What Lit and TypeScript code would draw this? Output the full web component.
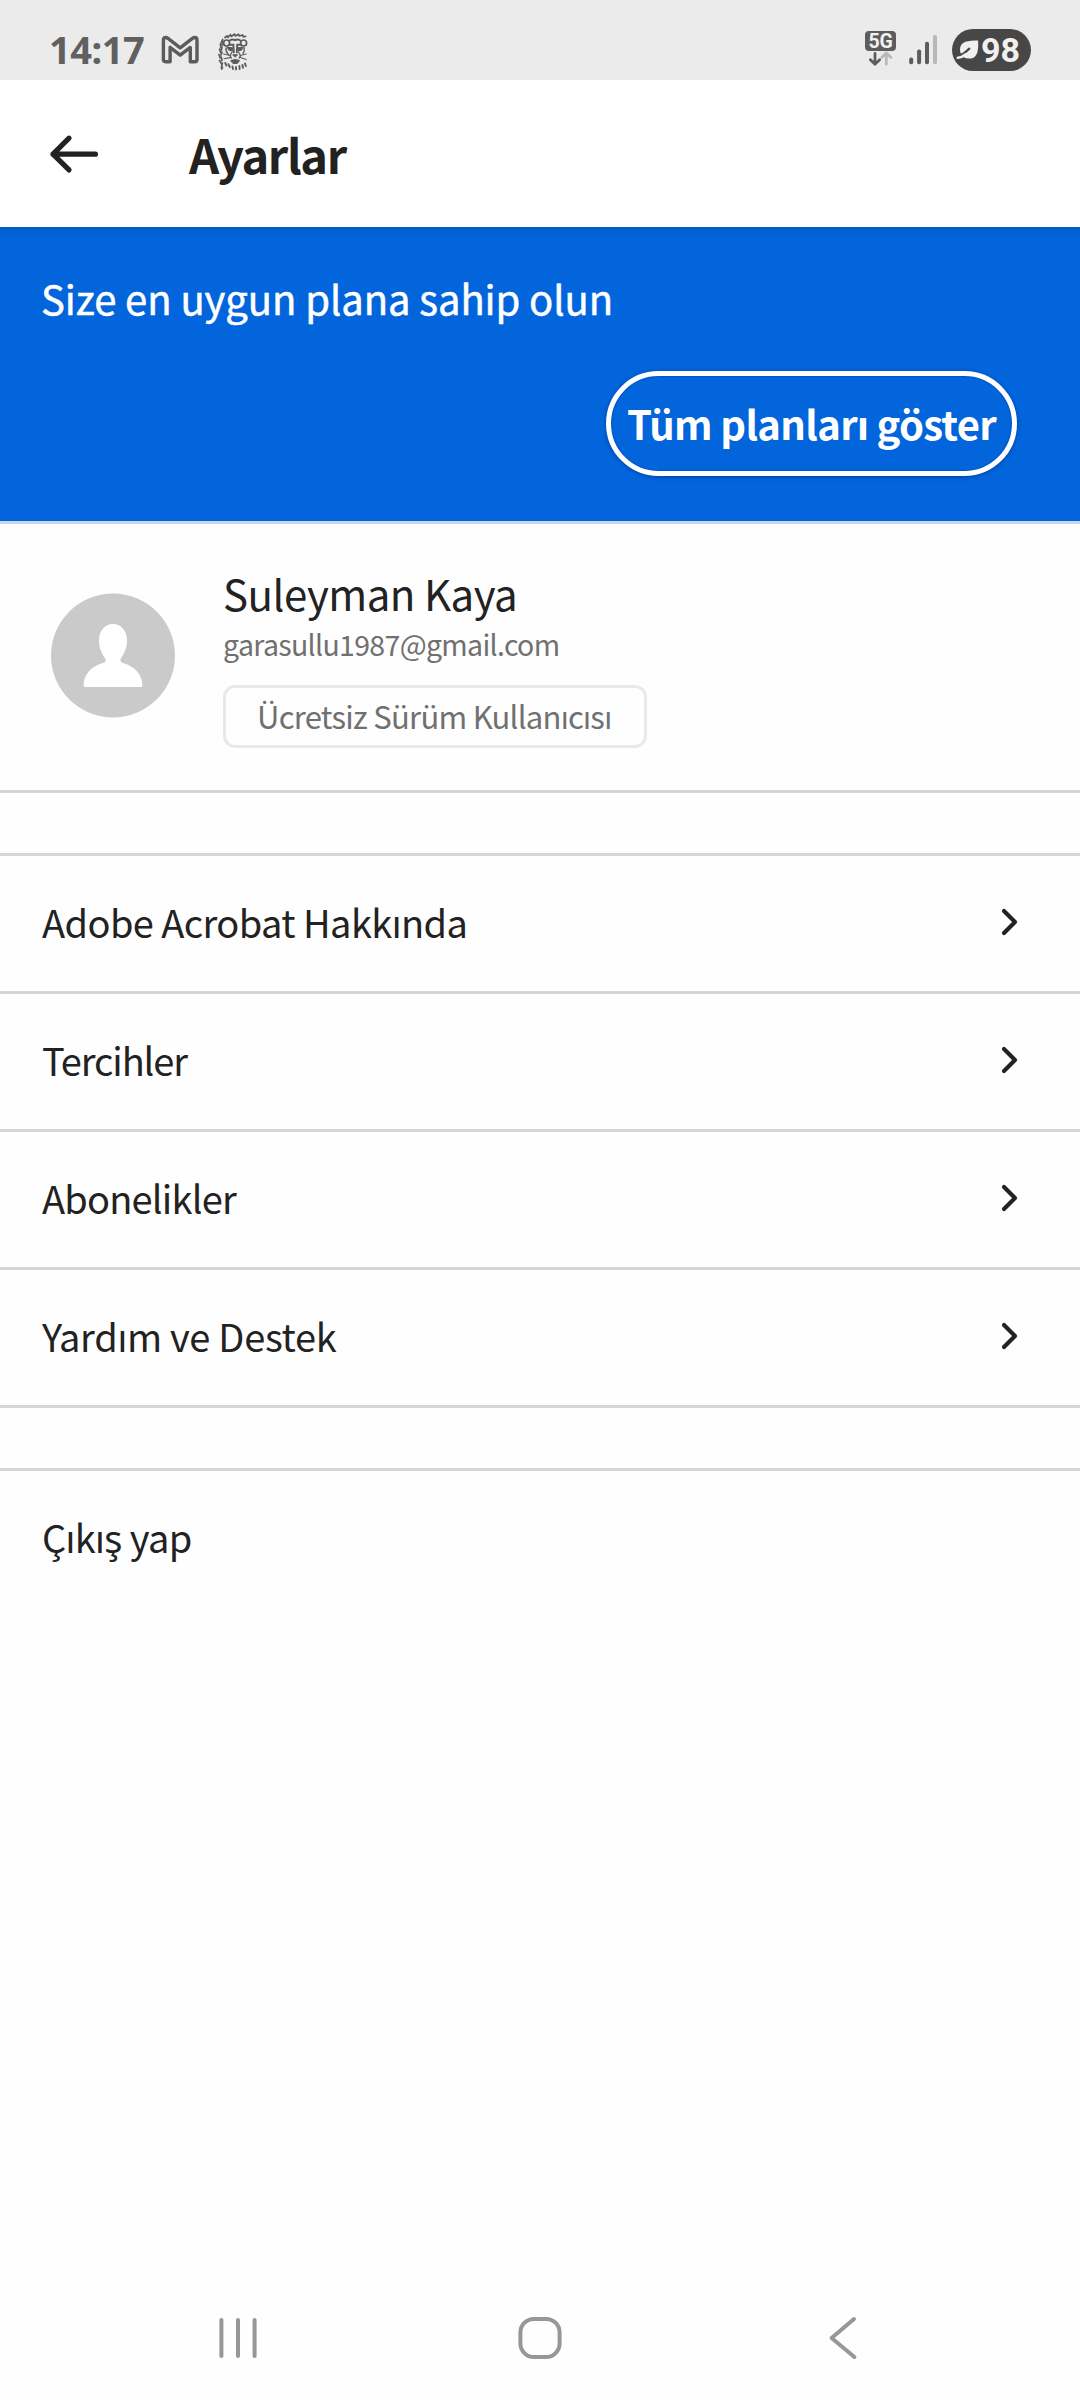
import { LitElement, html, css } from "lit";
import { customElement, property } from "lit/decorators.js";

interface SettingsItem {
  label: string;
  tracking: number;
}

const ITEMS: SettingsItem[] = [
  { label: "Adobe Acrobat Hakkında", tracking: -0.58 },
  { label: "Tercihler", tracking: -1.1 },
  { label: "Abonelikler", tracking: -0.8 },
  { label: "Yardım ve Destek", tracking: -0.3 },
];

@customElement("status-bar")
export class StatusBar extends LitElement {
  static styles = css`
    :host {
      display: flex;
      box-sizing: border-box;
      height: 80px;
      padding: 0 49px 0 49px;
      background: #ebebeb;
      align-items: flex-start;
      justify-content: space-between;
      color: #606060;
    }
    .side {
      display: flex;
      align-items: flex-start;
    }
    .time {
      width: 112px;
      padding-top: 24px;
      font: 700 38px/50px "Noto Sans", "Open Sans", sans-serif;
      letter-spacing: -0.5px;
    }
    .mail {
      margin-top: 35px;
      margin-right: 19px;
    }
    .lion {
      margin-top: 33px;
    }
    .net {
      width: 34px;
      margin-top: 31px;
      margin-right: 10px;
    }
    .tag {
      width: 31px;
      height: 20px;
      border-radius: 4px;
      background: #5c5c5c;
      color: #f1f1f1;
      font: 700 19.5px/21px Roboto, sans-serif;
      letter-spacing: -0.3px;
      text-align: center;
    }
    .signal {
      margin-top: 35px;
      margin-right: 14px;
    }
    svg {
      display: block;
    }
    .battery {
      display: flex;
      box-sizing: border-box;
      width: 79px;
      height: 42px;
      margin-top: 29px;
      padding-left: 4px;
      border-radius: 21px;
      background: #474747;
      color: #f0f0f0;
      align-items: center;
      gap: 2px;
      font: 700 34px/42px Roboto, sans-serif;
    }
  `;

  render() {
    return html`
      <div class="side">
        <span class="time">14:17</span>
        <svg class="mail" width="38" height="29" viewBox="0 0 38 29" fill="none" stroke="#5c5c5c" stroke-width="3.4" stroke-linejoin="round">
          <path d="M2.4 5.2Q2.4 2.5 4.8 2.5Q5.8 2.5 7 3.4L19.2 12.8L31.4 3.4Q32.6 2.5 33.6 2.5Q36 2.5 36 5.2V24.4Q36 26.8 33.8 26.8H29.3V12.4L19.2 20.2L9.1 12.4V26.8H4.6Q2.4 26.8 2.4 24.4Z" />
        </svg>
        <svg class="lion" width="30" height="38" viewBox="0 0 30 38" fill="none" stroke="#5c5c5c" stroke-width="1.5" stroke-linecap="round">
          <path d="M7 4.5L9 3L10 4.2L12.5 1.8L13.5 3.2L16.5 1.3L17.5 2.8L20.5 1.4L21.5 3L24.5 2L25.5 3.8L27.5 3.4" stroke-width="1.8" />
          <path d="M4.6 6.5L3 10M5.5 8.5L4.2 12M2.4 11L2.8 14.5M4 14L3.4 17M1.6 16L2.6 19.5M4 19L3 22M1 21.5L2.2 25M3.2 24L4 27.5M1.6 27.5L3.4 30.5M4.4 30L3.4 34.5M4.4 34.5L3.6 36" stroke-width="1.7" />
          <circle cx="8.6" cy="10" r="3" stroke-width="1.7" />
          <circle cx="25.6" cy="10" r="3" stroke-width="1.7" />
          <path d="M11 8Q14 5.6 17 7.2Q20 5.6 23.2 8M11.5 11.8H15.4L15.8 19.4M23 11.8H19.2L18.8 19.4" stroke-width="1.9" />
          <path d="M9.5 14.4L14.2 14.8V17.8L11 17ZM25 14.4L20.4 14.8V17.8L23.4 17Z" fill="#5c5c5c" stroke-width="1.3" />
          <path d="M15 21.8H19.6L17.3 24ZM13 27.5Q17.3 25.4 21.6 27.5L19.4 30.4H15.2Z" fill="#5c5c5c" stroke-width="1" />
          <path d="M8 15Q7.6 19 10.4 21.5M26.2 15Q26.8 18 25 20.5M13.8 19.6Q11 23 13.4 25M20.8 19.6Q23.6 23 21.2 25" stroke-width="1.4" />
          <path d="M12 22.5L5.6 21M12 24.6L6 25.8M22.4 22.5L28.2 21M22.4 24.6L28.2 26.6" stroke-width="1.1" />
          <path d="M7.2 29.8L8.4 32.6M10.4 31.2L11.8 34M14.4 33.4L15 36M18 34V36.4M21.4 33L21.6 36M24.4 32L25 34.8M27 30.4L27.8 33" stroke-width="1.9" />
        </svg>
      </div>
      <div class="side">
        <div class="net">
          <div class="tag">5G</div>
          <svg width="34" height="15" viewBox="0 0 34 15" fill="none" stroke-width="2.8" stroke-linecap="round" stroke-linejoin="round">
            <path d="M10 2.4V13M5.4 8.8L10 13.2L14.6 8.8" stroke="#5c5c5c" />
            <path d="M21.3 13.2V3M16.7 6.4L21.3 2L25.9 6.4" stroke="#b8b8b8" />
          </svg>
        </div>
        <svg class="signal" width="29" height="30" viewBox="0 0 29 30" fill="#5c5c5c">
          <rect x="0.2" y="22.6" width="4" height="6.6" rx="1.8" />
          <rect x="8.1" y="14.4" width="4" height="14.8" rx="1.8" />
          <rect x="16" y="6.8" width="4" height="22.4" rx="1.8" />
          <rect x="24" y="0" width="4" height="29.2" rx="1.8" fill="#b8b8b8" />
        </svg>
        <div class="battery">
          <svg width="23" height="22" viewBox="0 0 23 22">
            <path d="M22 1.4C22.6 9 22.4 19.6 13 19.6C9.6 19.6 8 18.6 7 17.6C5 15.4 4 13.4 4 10.4C4 2 12.4 1.4 22 1.4Z" fill="#f0f0f0" />
            <path d="M13.2 9.8C10 12.2 9.2 15 3.4 16.2" fill="none" stroke="#474747" stroke-width="2.4" stroke-linecap="round" />
            <path d="M9.4 15.4C7 17.4 5 18.6 1.8 18.8" fill="none" stroke="#f0f0f0" stroke-width="2.6" stroke-linecap="round" />
          </svg>
          <span>98</span>
        </div>
      </div>
    `;
  }
}

@customElement("settings-row")
export class SettingsRow extends LitElement {
  @property({ attribute: false }) item: SettingsItem = { label: "", tracking: 0 };
  @property({ type: Boolean }) plain = false;

  static styles = css`
    :host {
      display: flex;
      box-sizing: border-box;
      height: 135px;
      padding: 0 60px 4px 42px;
      align-items: center;
      justify-content: space-between;
      font-size: 38px;
      line-height: 56px;
      color: #222;
    }
    .chevron {
      display: block;
    }
  `;

  render() {
    return html`
      <span style=${`letter-spacing:${this.item.tracking}px`}>${this.item.label}</span>
      ${this.plain
        ? null
        : html`<svg class="chevron" width="20" height="30" viewBox="0 0 20 30" fill="none" stroke="#222" stroke-width="4.2" stroke-linecap="round" stroke-linejoin="round">
            <path d="M4 4L15 15L4 26" />
          </svg>`}
    `;
  }
}

@customElement("nav-bar")
export class NavBar extends LitElement {
  static styles = css`
    :host {
      display: grid;
      grid-template-columns: 476px 128px 476px;
      height: 125px;
      align-items: center;
      justify-items: center;
    }
    svg {
      display: block;
    }
    .back {
      justify-self: start;
      margin-left: 223px;
    }
  `;

  render() {
    return html`
      <svg width="40" height="46" viewBox="0 0 40 46" stroke="#979797" stroke-width="4" stroke-linecap="round">
        <path d="M3.4 5V41M20 5V41M36.6 5V41" />
      </svg>
      <svg width="46" height="46" viewBox="0 0 46 46" fill="none" stroke="#979797" stroke-width="4">
        <rect x="3.4" y="3.9" width="39.2" height="38.2" rx="13.5" />
      </svg>
      <svg class="back" width="34" height="46" viewBox="0 0 34 46" fill="none" stroke="#979797" stroke-width="4" stroke-linecap="round" stroke-linejoin="round">
        <path d="M27 4L4.6 23L27.4 42" />
      </svg>
    `;
  }
}

@customElement("app-root")
export class AppRoot extends LitElement {
  static styles = css`
    :host {
      display: flex;
      flex-direction: column;
      width: 1080px;
      height: 2400px;
      background: #fefefe;
      color: #222;
      font-family: "Noto Sans CJK SC", "Noto Sans", sans-serif;
      overflow: hidden;
    }
    .header {
      display: flex;
      height: 147px;
      padding-left: 47px;
      background: #fff;
      align-items: center;
    }
    .header svg {
      display: block;
      margin-right: 88px;
    }
    .title {
      margin: 0;
      font-size: 47px;
      line-height: 70px;
      font-weight: 700;
      letter-spacing: -1.4px;
    }
    .promo {
      display: flex;
      flex-direction: column;
      box-sizing: border-box;
      height: 294px;
      padding: 41px 63px 0 41px;
      background: linear-gradient(#005dcb 0, #0265dc 14px);
      color: #fff;
    }
    .promo p {
      margin: 0;
      font-size: 40px;
      line-height: 60px;
      letter-spacing: -0.08px;
      -webkit-text-stroke: 0.5px #fff;
    }
    .plans {
      box-sizing: border-box;
      align-self: flex-end;
      width: 411px;
      height: 105px;
      margin-top: 43px;
      padding: 0;
      border: 5px solid #fff;
      border-radius: 53px;
      background: #0265dc;
      box-shadow: 0 1px 4px rgba(0, 20, 80, 0.45), inset 0 0 2px rgba(0, 20, 80, 0.5);
      color: #fff;
      font: 700 40px/95px "Noto Sans CJK SC", "Noto Sans", sans-serif;
      letter-spacing: -0.68px;
      text-align: center;
      white-space: nowrap;
    }
    .profile {
      display: flex;
      box-sizing: border-box;
      height: 272px;
      border-top: 3px solid #c8d6e8;
      border-bottom: 3px solid #d5d5d5;
      align-items: flex-start;
    }
    .avatar {
      display: block;
      margin: 69px 48px 0 51px;
    }
    .who {
      display: flex;
      flex-direction: column;
      align-items: flex-start;
      padding-top: 44px;
    }
    .name {
      font-size: 42px;
      line-height: 50px;
      letter-spacing: -0.5px;
    }
    .mail {
      margin-top: 6px;
      font-size: 28.5px;
      line-height: 40px;
      letter-spacing: -0.67px;
      color: #707070;
    }
    .badge {
      box-sizing: border-box;
      width: 424px;
      height: 63px;
      margin-top: 21px;
      padding-left: 31px;
      border: 3px solid #e9e9e9;
      border-radius: 12px;
      font-size: 31px;
      line-height: 56px;
      letter-spacing: -0.72px;
      color: #707070;
      white-space: nowrap;
    }
    .list {
      margin-top: 60px;
      border-top: 3px solid #d5d5d5;
    }
    .list settings-row {
      border-bottom: 3px solid #d5d5d5;
      height: 138px;
    }
    .last {
      margin-top: 60px;
      border-top: 3px solid #d5d5d5;
    }
    nav-bar {
      margin-top: auto;
    }
  `;

  render() {
    return html`
      <status-bar></status-bar>
      <div class="header">
        <svg width="54" height="42" viewBox="0 0 54 42" fill="none" stroke="#222" stroke-width="5.2" stroke-linecap="round" stroke-linejoin="round">
          <path d="M22 5.2L6 21.2L22 36.9M6 21.2H48.4" />
        </svg>
        <h1 class="title">Ayarlar</h1>
      </div>
      <div class="promo">
        <p>Size en uygun plana sahip olun</p>
        <button class="plans">Tüm planları göster</button>
      </div>
      <div class="profile">
        <svg class="avatar" width="124" height="125" viewBox="0 0 124 125">
          <circle cx="62" cy="62.5" r="62" fill="#cacaca" />
          <path d="M62 31C70.4 31 76 38 76 47.5C76 54.5 73.6 59.6 71 63.4C69.6 65.6 69.2 66.6 69.6 68C70 69.4 71.2 69.9 73.4 70.6C83.6 73.6 91.4 81.6 91.4 92.4Q91.4 94 89.8 94H34.2Q32.6 94 32.6 92.4C32.6 81.6 40.4 73.6 50.6 70.6C52.8 69.9 54 69.4 54.4 68C54.8 66.6 54.4 65.6 53 63.4C50.4 59.6 48 54.5 48 47.5C48 38 53.6 31 62 31Z" fill="#fff" />
        </svg>
        <div class="who">
          <div class="name">Suleyman Kaya</div>
          <div class="mail">garasullu1987@gmail.com</div>
          <div class="badge">Ücretsiz Sürüm Kullanıcısı</div>
        </div>
      </div>
      <div class="list">
        ${ITEMS.map((item) => html`<settings-row .item=${item}></settings-row>`)}
      </div>
      <div class="last">
        <settings-row plain .item=${{ label: "Çıkış yap", tracking: -0.65 }}></settings-row>
      </div>
      <nav-bar></nav-bar>
    `;
  }
}
